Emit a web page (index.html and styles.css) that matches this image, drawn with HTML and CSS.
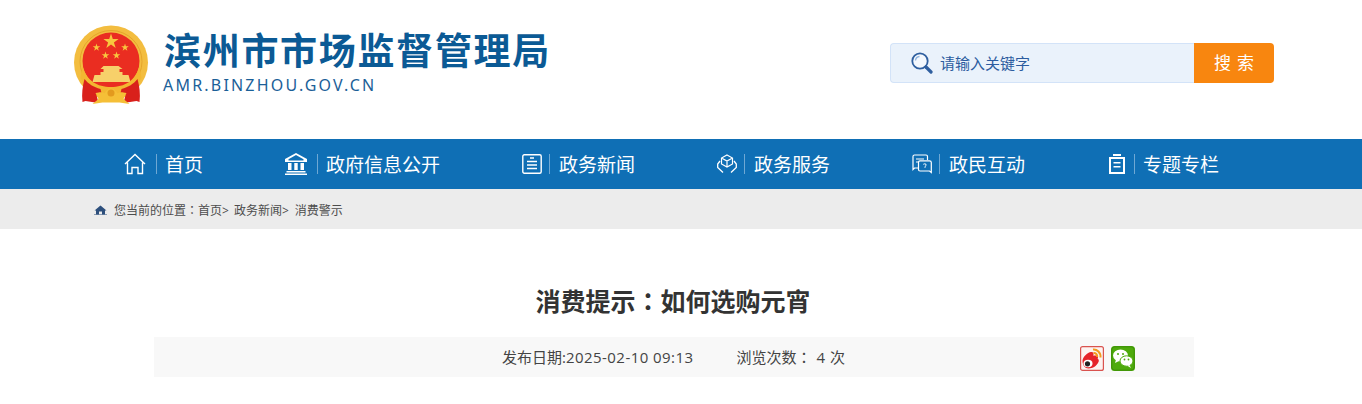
FILE: index.html
```html
<!DOCTYPE html>
<html lang="zh-CN">
<head>
<meta charset="utf-8">
<title>消费提示：如何选购元宵</title>
<link rel="stylesheet" href="styles.css">
</head>
<body>
<header class="header">
  <div class="brand">
    <svg class="emblem" viewBox="0 0 76 82" aria-hidden="true">
      <defs>
        <path id="star" d="M0-1L.225-.309H.951L.363.118.588.809 0 .382-.588.809-.363.118-.951-.309H-.225Z" fill="#f8c63e"/>
      </defs>
      <circle cx="37" cy="38.500" r="37" fill="#f3bd3f"/>
      <circle cx="37" cy="37.500" r="31" fill="none" stroke="#e5a52b" stroke-width="1"/>
      <circle cx="37" cy="37" r="28.500" fill="#ea2d21"/>
      <use href="#star" transform="translate(37 17.500) scale(8)"/>
      <use href="#star" transform="translate(22.500 23.500) scale(4)"/>
      <use href="#star" transform="translate(51 23.500) scale(4)"/>
      <use href="#star" transform="translate(31.500 31.500) scale(4)"/>
      <use href="#star" transform="translate(42.500 31.500) scale(4)"/>
      <path d="M29.500 42h15l4 3h-3v3h3v3h6l2 7H18.500l2-7h6v-3h3v-3h-3z" fill="#f7d06a"/>
      <path d="M8.500 42C12.500 57 23.500 63 37 63S61.500 57 65.500 42L67.500 54C61.500 66 49.500 70 37 70S12.500 66 6.500 54Z" fill="#f3b731"/>
      <path d="M10.500 55C14.500 60 19.500 63 26.500 65L28.500 73 22.500 71 24.500 79 11.500 77 8.500 78C7.500 70 8.500 62 10.500 55Z" fill="#d9201b"/>
      <path d="M63.500 55C59.500 60 54.500 63 47.500 65L45.500 73 51.500 71 49.500 79 62.500 77 65.500 78C66.500 70 65.500 62 63.500 55Z" fill="#d9201b"/>
      <path d="M18.500 80l6-5-3-6c5-1 7-1 9 .5 2-3.500 4-5 6.500-5s4.500 1.500 6.500 5c2-1.500 4-1.500 9-.5l-3 6 6 5-10-1.500H28.500z" fill="#f5bf37"/>
      <circle cx="37" cy="69" r="3.500" fill="#e39a1e"/>
    </svg>
    <div class="brand-text">
      <div class="brand-name">滨州市市场监督管理局</div>
      <div class="brand-domain">AMR.BINZHOU.GOV.CN</div>
    </div>
  </div>
  <form class="search">
    <div class="search-field">
      <svg class="search-icon" viewBox="0 0 22 22" aria-hidden="true">
        <circle cx="9" cy="9" r="7.700" fill="#f4f8fd" stroke="#2f5f9f" stroke-width="1.800"/>
        <path d="M4.500 8.500a4.500 4.500 0 0 1 4-4" fill="none" stroke="#8fb4de" stroke-width="1.300"/>
        <path d="M15 15l5 5" stroke="#2f5f9f" stroke-width="3.200" stroke-linecap="round"/>
      </svg>
      <span class="search-hint">请输入关键字</span>
    </div>
    <div class="search-button">搜 索</div>
  </form>
</header>

<nav class="nav">
  <a class="nav-item">
    <svg class="nav-icon wide" viewBox="0 0 22 22" aria-hidden="true">
      <path d="M1 11L11 1.500 21 11M3.500 9.500V20.500H8V14.500H14V20.500H18.500V9.500" fill="none" stroke="#fff" stroke-width="1.400"/>
    </svg>
    <span class="nav-label">首页</span>
  </a>
  <a class="nav-item">
    <svg class="nav-icon wide" viewBox="0 0 22 22" aria-hidden="true">
      <path d="M11 0L22 6V9H0V6Z" fill="#fff"/>
      <path d="M11 2L3.500 6.300V7.500H18.500V6.300Z" fill="#0f6fb5"/>
      <path d="M3 10h3.500v7H3zM9.300 10h3.400v7H9.300zM15.500 10H19v7h-3.500zM1.500 18h19v1.500h-19zM0 20.500h22V22H0z" fill="#fff"/>
    </svg>
    <span class="nav-label">政府信息公开</span>
  </a>
  <a class="nav-item">
    <svg class="nav-icon" viewBox="0 0 20 20" aria-hidden="true">
      <rect x=".8" y=".8" width="18.400" height="18.400" rx="1.500" fill="none" stroke="#fff" stroke-width="1.400"/>
      <path d="M8 4h4M5 7.500h10M5 11h10M5 14.500h10" stroke="#fff" stroke-width="1.400"/>
    </svg>
    <span class="nav-label">政务新闻</span>
  </a>
  <a class="nav-item">
    <svg class="nav-icon" viewBox="0 0 20 20" aria-hidden="true">
      <path d="M10 1l5.500 3v6L10 13 4.500 10V4zM4.500 4L10 7l5.500-3M10 7v6" fill="none" stroke="#fff" stroke-width="1.200"/>
      <path d="M3 7L.7 10v3.500L6 18.500M17 7l2.300 3v3.500L14 18.500" fill="none" stroke="#fff" stroke-width="1.300"/>
    </svg>
    <span class="nav-label">政务服务</span>
  </a>
  <a class="nav-item">
    <svg class="nav-icon" viewBox="0 0 20 20" aria-hidden="true">
      <path d="M6 14H2.500L1 15.500V2.500Q1 1 2.500 1H14Q15.500 1 15.500 2.500V6" fill="none" stroke="#fff" stroke-width="1.200"/>
      <path d="M4 5h8M4 8h3" stroke="#fff" stroke-width="1.100"/>
      <path d="M8 6.800h9.500Q19.300 6.800 19.300 8.500V18.500L17.500 17H8Q6.500 17 6.500 15.500V8.500Q6.500 6.800 8 6.800z" fill="none" stroke="#fff" stroke-width="1.200"/>
      <path d="M11.300 10.300q1.700-1 2.700 0 .7 1.200-1 2.200v1.300" fill="none" stroke="#fff" stroke-width="1"/>
    </svg>
    <span class="nav-label">政民互动</span>
  </a>
  <a class="nav-item">
    <svg class="nav-icon narrow" viewBox="0 0 16 20" aria-hidden="true">
      <path d="M4 0h8v2H4zM0 3h16v17H0zM2 5v13h12V5zM4.500 8h7v1.500h-7zM4.500 12h7v1.500h-7z" fill="#fff" fill-rule="evenodd"/>
    </svg>
    <span class="nav-label">专题专栏</span>
  </a>
</nav>

<div class="crumbs">
  <div class="crumbs-inner">
    <svg class="crumb-icon" viewBox="0 0 13 10" aria-hidden="true">
      <path d="M6.500 .5L12.500 5.500H11V9.500H8V6.500H5V9.500H2V5.500H.5z" fill="#2d4f7c"/>
      <path d="M0 9.500h13V10H0z" fill="#2d4f7c"/>
    </svg>
    <span>您当前的位置<span class="colon" lang="zh-Hant">：</span>首页&gt;</span>
    <span class="crumb-next">政务新闻&gt;</span>
    <span class="crumb-next">消费警示</span>
  </div>
</div>

<main class="article">
  <h1 class="title">消费提示<span class="colon" lang="zh-Hant">：</span>如何选购元宵</h1>
  <div class="meta">
    <span class="meta-text">发布日期:<span class="meta-digits">2025-02-10 09:13</span></span>
    <span class="meta-text meta-views">浏览次数<span class="colon" lang="zh-Hant">：</span> 4 次</span>
    <div class="share">
      <svg class="share-icon" viewBox="0 0 24 25" aria-hidden="true">
        <rect x=".6" y=".6" width="22.800" height="23.800" rx="2" fill="#fdf3f1" stroke="#d9534f" stroke-width="1.200"/>
        <path d="M2.500 15c0-4 5-8.500 8.500-9 2.500-.3 3 1.500 2.300 3.700 2-.6 4.700-.4 4.700 1.800 0 .6-.2 1-.4 1.300 1.300.7 1.400 1.900 1 3C16.800 20 13 22.500 8.500 22.500 5 22.500 2.500 19 2.500 15z" fill="#e5232a"/>
        <ellipse cx="8" cy="17.500" rx="4.500" ry="3.700" fill="#fff"/>
        <circle cx="7.500" cy="17.800" r="2.600" fill="#222"/>
        <path d="M13 3.500c4-.5 8 3 7.500 8M13.500 7c2.200-.3 4 1.500 3.700 4" fill="none" stroke="#f39a1f" stroke-width="2"/>
      </svg>
      <svg class="share-icon" viewBox="0 0 24 25" aria-hidden="true">
        <rect width="24" height="25" rx="3.500" fill="#4eaa0c"/>
        <rect x=".8" y=".8" width="22.400" height="23.400" rx="3" fill="none" stroke="#3d8f08" stroke-width="1"/>
        <ellipse cx="9.500" cy="9.500" rx="7.500" ry="6" fill="#fff"/>
        <path d="M5 13.500l-1 3.500 4-2z" fill="#fff"/>
        <ellipse cx="15.500" cy="15" rx="6.500" ry="5.200" stroke="#4eaa0c" stroke-width="1" fill="#fff"/>
        <path d="M18.500 19l1.500 3-4-2.500z" fill="#fff"/>
        <circle cx="7" cy="8" r="1" fill="#4eaa0c"/><circle cx="12" cy="8" r="1" fill="#4eaa0c"/>
        <circle cx="13.500" cy="13.500" r=".9" fill="#4eaa0c"/><circle cx="17.500" cy="13.500" r=".9" fill="#4eaa0c"/>
      </svg>
    </div>
  </div>
</main>
</body>
</html>
```

FILE: styles.css
```css
* { box-sizing: border-box; }

html, body {
  margin: 0;
  padding: 0;
  height: 404px;
  overflow: hidden;
  background: #fff;
  font-family: "Open Sans", "Noto Sans CJK SC", sans-serif;
  color: #333;
}

.header {
  width: 1200px;
  height: 139px;
  margin-left: 74px;
  display: flex;
  justify-content: space-between;
  align-items: flex-start;
}

.brand {
  display: flex;
  padding-top: 24px;
}

.emblem {
  width: 76px;
  height: 82px;
  flex: none;
}

.brand-text {
  margin-left: 13px;
}

.brand-name {
  font-family: "Noto Sans CJK SC", sans-serif;
  font-weight: 700;
  font-size: 37px;
  line-height: 46px;
  letter-spacing: 1.700px;
  color: #0b5a95;
  margin-top: 2px;
  margin-left: 1px;
}

.brand-domain {
  font-family: "Noto Sans", sans-serif;
  font-size: 16px;
  line-height: 20px;
  letter-spacing: 2.200px;
  color: #1b6098;
  margin-top: 3px;
}

.search {
  display: flex;
  margin: 43px 0 0;
  height: 40px;
}

.search-field {
  width: 304px;
  display: flex;
  align-items: center;
  padding-left: 20px;
  background: #eaf2fb;
  border: 1px solid #d3e3f8;
  border-right: 0;
  border-radius: 4px 0 0 4px;
}

.search-icon {
  width: 22px;
  height: 22px;
  flex: none;
}

.search-hint {
  margin-left: 7px;
  padding-bottom: 1px;
  font-family: "Noto Sans CJK SC", sans-serif;
  font-size: 15px;
  color: #2c5c9f;
}

.search-button {
  width: 80px;
  background: #f8860f;
  border-radius: 0 4px 4px 0;
  color: #fff;
  font-family: "Noto Sans CJK SC", sans-serif;
  font-size: 17px;
  line-height: 38px;
  text-align: center;
  word-spacing: 2px;
}

.nav {
  height: 50px;
  background: #0f6fb5;
  padding-left: 124px;
  display: flex;
  align-items: center;
  gap: 82px;
}

.nav-item {
  display: flex;
  align-items: center;
  color: #fff;
}

.nav-icon {
  width: 20px;
  height: 20px;
  margin-right: 7px;
  flex: none;
}

.nav-icon.wide {
  width: 22px;
  height: 22px;
  margin-right: 10px;
}

.nav-icon.narrow {
  width: 16px;
  margin: 0 9px 0 2px;
}

.nav-label {
  font-family: "Noto Sans CJK SC", sans-serif;
  font-size: 19px;
  line-height: 20px;
  padding-left: 9px;
  border-left: 1px solid #6ea8d4;
}

.wide + .nav-label,
.narrow + .nav-label {
  padding-left: 8px;
}

.crumbs {
  height: 40px;
  background: #ececec;
}

.crumbs-inner {
  display: flex;
  align-items: center;
  height: 40px;
  padding: 1px 0 0 94px;
  font-size: 12px;
  color: #4d4d4d;
}

.crumb-icon {
  width: 13px;
  height: 10px;
  margin-right: 7px;
  flex: none;
}

.crumb-next {
  margin-left: 5px;
}

.crumb-next + .crumb-next {
  margin-left: 6px;
}

.colon {
  font-family: "Noto Sans CJK TC", sans-serif;
}

.article {
  width: 1200px;
  margin-left: 74px;
}

.title {
  margin: 0;
  padding: 52px 2px 0 0;
  height: 108px;
  font-family: "Noto Sans CJK SC", sans-serif;
  font-size: 25px;
  line-height: 38px;
  font-weight: 700;
  text-align: center;
  color: #333;
}

.meta {
  width: 1040px;
  height: 40px;
  margin: 0 auto;
  padding: 0 59px 0 348px;
  background: #f8f8f8;
  display: flex;
  align-items: center;
  font-size: 15px;
  color: #444;
}

.meta-text {
  white-space: nowrap;
  padding-bottom: 2px;
}

.meta-digits {
  letter-spacing: .45px;
}

.meta-views {
  margin-left: 43px;
  word-spacing: 1px;
}

.share {
  margin-left: auto;
  margin-top: 2px;
  display: flex;
  gap: 7px;
}

.share-icon {
  width: 24px;
  height: 25px;
  display: block;
}
```
